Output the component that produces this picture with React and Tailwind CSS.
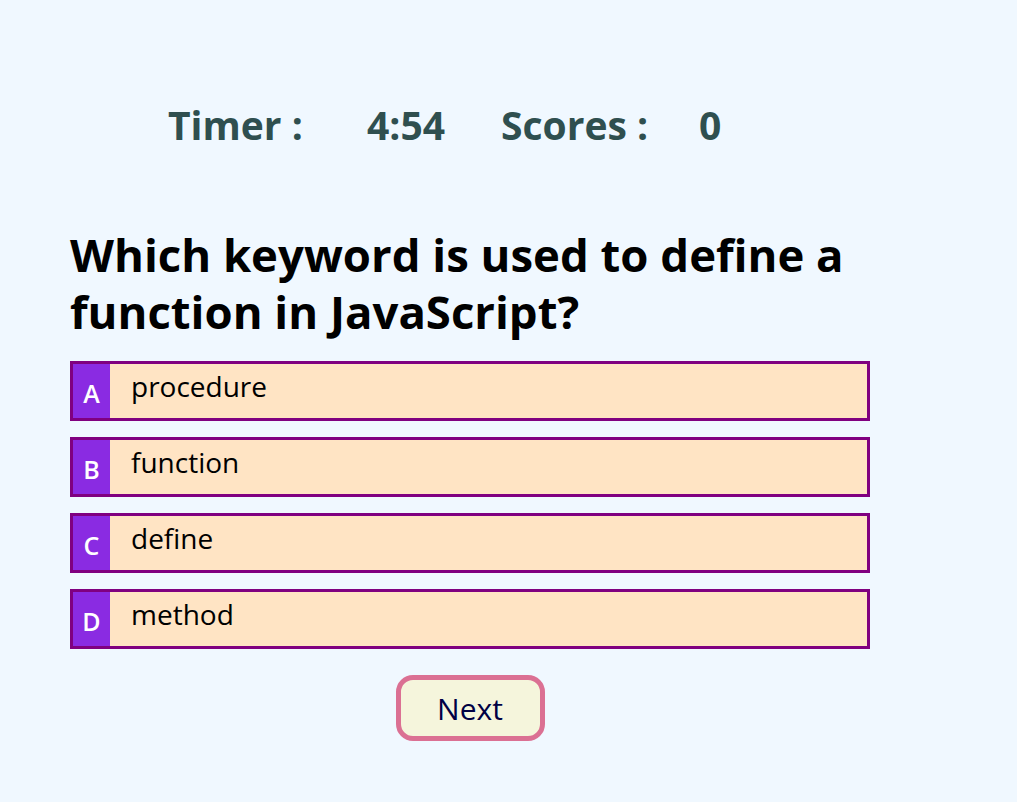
const OPTIONS = [
  { key: 'A', text: 'procedure' },
  { key: 'B', text: 'function' },
  { key: 'C', text: 'define' },
  { key: 'D', text: 'method' },
];

function Option({ letter, text }) {
  return (
    <div className="flex h-[60px] border-[3px] border-[#800080] bg-[#ffe4c4]">
      <span className="flex w-[37px] items-center justify-center bg-[#8a2be2] pt-[5px] text-[25px] font-semibold text-white">
        {letter}
      </span>
      <span className="pl-[21px] pt-[3px] text-[28px] leading-[38px] text-black">{text}</span>
    </div>
  );
}

export default function App() {
  return (
    <div
      className="min-h-[802px] bg-[#f0f8ff] px-[70px] pt-[99px]"
      style={{ fontFamily: '"Open Sans", "Noto Sans", sans-serif' }}
    >
      <div className="flex items-center pl-[98px] text-[39px] font-bold leading-[52px] text-[#2f4f4f]">
        <span className="w-[199px]">Timer :</span>
        <span className="w-[134px]">4:54</span>
        <span className="w-[198px]">Scores :</span>
        <span>0</span>
      </div>

      <h1 className="mt-[75px] w-[800px] text-[45.5px] font-bold leading-[57px] text-black">
        Which keyword is used to define a function in JavaScript?
      </h1>

      <div className="mt-[21px] flex w-[800px] flex-col gap-4">
        {OPTIONS.map((o) => (
          <Option key={o.key} letter={o.key} text={o.text} />
        ))}
      </div>

      <div className="mt-[26px] flex w-[800px] justify-center">
        <button className="box-border h-[66px] w-[149px] rounded-[17px] border-[5px] border-[#db7093] bg-[#f5f5dc] text-[30px] text-[#000044]">
          Next
        </button>
      </div>
    </div>
  );
}
